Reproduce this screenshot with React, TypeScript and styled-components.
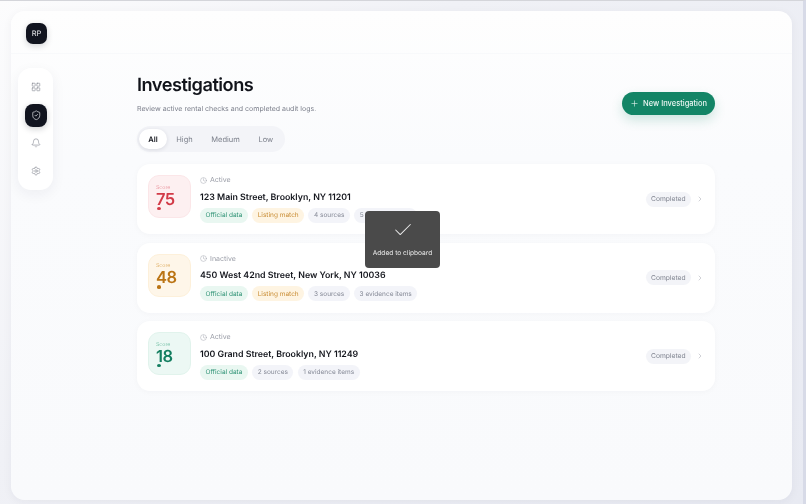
import React from 'react';
import styled, { createGlobalStyle } from 'styled-components';
import { Bell, Check, ChevronRight, Clock, LayoutGrid, Plus, Settings, ShieldCheck } from 'lucide-react';

const GlobalStyle = createGlobalStyle`
  html, body {
    margin: 0;
    padding: 0;
    height: 100%;
    overflow: hidden;
  }
  body {
    background: #e9ebf3;
    font-family: Inter, "Liberation Sans", sans-serif;
    text-rendering: geometricPrecision;
    -webkit-font-smoothing: antialiased;
  }
  * {
    box-sizing: border-box;
  }
`;

const Page = styled.div`
  width: 806px;
  height: 504px;
  padding: 10px 11px 4px 11px;
  border-top: 1px solid #d4d5da;
  border-right: 3px solid #d7dae7;
  background: linear-gradient(135deg, #fcfcfd, #f0f1f6 35%, #e8eaf2);
`;

const Frame = styled.div`
  position: relative;
  height: 100%;
  border-radius: 14px;
  background: linear-gradient(#fefefe, #fafbfd 30%, #f9fafc);
  box-shadow: 0 2px 10px rgba(30, 35, 60, 0.05);
  display: flex;
  flex-direction: column;
  will-change: transform;
`;

const TopBar = styled.header`
  height: 43px;
  flex: none;
  padding: 12px 0 0 15px;
  border-bottom: 1px solid #f8f9fb;
`;

const Avatar = styled.div`
  width: 21px;
  height: 21px;
  border-radius: 7px;
  background: #11141f;
  color: #e8e9ed;
  font-size: 7.5px;
  font-weight: 400;
  display: flex;
  align-items: center;
  justify-content: center;
  box-shadow: 0 2px 6px rgba(17, 20, 31, 0.18);
`;

const Body = styled.div`
  flex: 1;
  display: flex;
  padding: 14px 0 0 7px;
`;

const Rail = styled.nav`
  width: 35px;
  height: 122px;
  flex: none;
  border-radius: 13px;
  background: #fff;
  box-shadow: 0 4px 14px rgba(30, 35, 60, 0.06);
  display: flex;
  flex-direction: column;
  align-items: center;
  padding: 8px 0 0 1px;
  gap: 5.5px;
`;

const RailItem = styled.div<{ $active?: boolean }>`
  width: 22.5px;
  height: 22.5px;
  border-radius: 8px;
  display: flex;
  align-items: center;
  justify-content: center;
  background: ${(p) => (p.$active ? '#11141f' : 'transparent')};
  color: ${(p) => (p.$active ? '#f2f3f6' : '#7d818c')};
  box-shadow: ${(p) => (p.$active ? '0 2px 6px rgba(17,20,31,0.2)' : 'none')};
`;

const Main = styled.main`
  width: 578px;
  margin-left: 84px;
  display: flex;
  flex-direction: column;
`;

const HeadRow = styled.div`
  display: flex;
  justify-content: space-between;
  align-items: flex-start;
`;

const Title = styled.h1`
  margin: 0;
  padding-top: 5px;
  color: #11131a;
  font-size: 18.2px;
  line-height: 24px;
  font-weight: 600;
  letter-spacing: -0.5px;
`;

const Subtitle = styled.p`
  margin: 6px 0 0;
  color: #7b7f8b;
  font-size: 7px;
  line-height: 11px;
`;

const NewButton = styled.button`
  width: 93px;
  height: 23px;
  margin-top: 24px;
  padding: 0;
  border: none;
  border-radius: 12px;
  background: #138566;
  color: #e9f5f1;
  font-family: inherit;
  font-size: 7.5px;
  font-weight: 500;
  white-space: nowrap;
  display: flex;
  align-items: center;
  justify-content: center;
  gap: 4px;
  box-shadow: 0 5px 12px rgba(19, 133, 102, 0.2);
`;

const Filters = styled.div`
  align-self: flex-start;
  height: 26px;
  margin-top: 11px;
  padding: 3px 2px;
  border-radius: 13px;
  background: #f3f4f8;
  display: flex;
  align-items: center;
`;

const Filter = styled.div<{ $active?: boolean }>`
  height: 20px;
  padding: 0 9.3px;
  border-radius: 10px;
  display: flex;
  align-items: center;
  font-size: 7.5px;
  font-weight: ${(p) => (p.$active ? 600 : 400)};
  color: ${(p) => (p.$active ? '#14161d' : '#7d818c')};
  background: ${(p) => (p.$active ? '#fff' : 'transparent')};
  box-shadow: ${(p) => (p.$active ? '0 1px 4px rgba(30,35,60,0.12)' : 'none')};
`;

const List = styled.div`
  margin-top: 12px;
  display: flex;
  flex-direction: column;
  gap: 8.5px;
`;

const Card = styled.article`
  height: 70px;
  padding: 0 6px 0 11px;
  border-radius: 13px;
  background: #fff;
  box-shadow: 0 1px 6px rgba(30, 35, 60, 0.03);
  display: flex;
  align-items: center;
`;

type Tone = 'red' | 'amber' | 'green';

const tones: Record<Tone, { bg: string; border: string; label: string; value: string }> = {
  red: { bg: '#fdf0f1', border: '#fbe6e8', label: '#eb9aa3', value: '#d23b48' },
  amber: { bg: '#fef6e9', border: '#fdf0da', label: '#e0b169', value: '#bb7414' },
  green: { bg: '#ecf8f4', border: '#e1f3ec', label: '#7cc4ab', value: '#137e60' },
};

const ScoreBox = styled.div<{ $tone: Tone }>`
  position: relative;
  width: 43px;
  height: 43px;
  flex: none;
  align-self: flex-start;
  margin-top: 11px;
  padding: 8.5px 0 0 7px;
  border-radius: 11px;
  background: ${(p) => tones[p.$tone].bg};
  border: 1px solid ${(p) => tones[p.$tone].border};
`;

const ScoreLabel = styled.div<{ $tone: Tone }>`
  color: ${(p) => tones[p.$tone].label};
  font-size: 5.2px;
  line-height: 7px;
`;

const ScoreValue = styled.div<{ $tone: Tone }>`
  color: ${(p) => tones[p.$tone].value};
  font-size: 16.5px;
  line-height: 15px;
  font-weight: 600;
  letter-spacing: -0.5px;
`;

const ScoreDot = styled.span<{ $tone: Tone }>`
  position: absolute;
  left: 7.5px;
  bottom: 7px;
  width: 4.5px;
  height: 3.5px;
  border-radius: 50%;
  background: ${(p) => tones[p.$tone].value};
`;

const Info = styled.div`
  flex: 1;
  margin-left: 9px;
  display: flex;
  flex-direction: column;
`;

const StatusLine = styled.div`
  display: flex;
  align-items: center;
  gap: 3px;
  color: #9a9da7;
  font-size: 7px;
  line-height: 10px;
`;

const Address = styled.div`
  margin-top: 5.5px;
  color: #14161d;
  font-size: 8.8px;
  line-height: 14px;
  font-weight: 600;
`;

const Tags = styled.div`
  margin-top: 3px;
  display: flex;
  gap: 4.3px;
`;

const tagTones = {
  green: { bg: '#e9f7f1', color: '#2d9274' },
  amber: { bg: '#fef4e2', color: '#c98d35' },
  grey: { bg: '#f3f4f9', color: '#868a97' },
};

const Tag = styled.span<{ $tone: keyof typeof tagTones }>`
  height: 15px;
  padding: 0 5.5px;
  border-radius: 8px;
  display: flex;
  align-items: center;
  font-size: 6.5px;
  background: ${(p) => tagTones[p.$tone].bg};
  color: ${(p) => tagTones[p.$tone].color};
`;

const Done = styled.span`
  height: 15px;
  padding: 0 5.5px;
  border-radius: 8px;
  display: flex;
  align-items: center;
  font-size: 6.7px;
  background: #f3f4f8;
  color: #7f838f;
`;

const Chevron = styled.span`
  width: 13px;
  margin-left: 2px;
  margin-right: 3px;
  display: flex;
  justify-content: center;
  color: #a2a5af;
`;

const Toast = styled.div`
  position: absolute;
  left: 354px;
  top: 200px;
  width: 75px;
  height: 57px;
  border-radius: 4px;
  background: #4a4a4a;
  color: #eaeaea;
  font-size: 6.6px;
  display: flex;
  flex-direction: column;
  align-items: center;
  padding-top: 8px;
  gap: 8px;
`;

const investigations = [
  {
    score: 75,
    tone: 'red' as Tone,
    status: 'Active',
    address: '123 Main Street, Brooklyn, NY 11201',
    listing: true,
    sources: '4 sources',
    evidence: '5 evidence items',
  },
  {
    score: 48,
    tone: 'amber' as Tone,
    status: 'Inactive',
    address: '450 West 42nd Street, New York, NY 10036',
    listing: true,
    sources: '3 sources',
    evidence: '3 evidence items',
  },
  {
    score: 18,
    tone: 'green' as Tone,
    status: 'Active',
    address: '100 Grand Street, Brooklyn, NY 11249',
    listing: false,
    sources: '2 sources',
    evidence: '1 evidence items',
  },
];

export default function App() {
  return (
    <Page>
      <GlobalStyle />
      <Frame>
        <TopBar>
          <Avatar>RP</Avatar>
        </TopBar>
        <Body>
          <Rail>
            <RailItem>
              <LayoutGrid size={10} strokeWidth={1.4} />
            </RailItem>
            <RailItem $active>
              <ShieldCheck size={10.5} strokeWidth={1.5} />
            </RailItem>
            <RailItem>
              <Bell size={10} strokeWidth={1.4} />
            </RailItem>
            <RailItem>
              <Settings size={10} strokeWidth={1.4} />
            </RailItem>
          </Rail>
          <Main>
            <HeadRow>
              <div>
                <Title>Investigations</Title>
                <Subtitle>Review active rental checks and completed audit logs.</Subtitle>
              </div>
              <NewButton>
                <Plus size={9} strokeWidth={1.6} />
                New Investigation
              </NewButton>
            </HeadRow>
            <Filters>
              <Filter $active>All</Filter>
              <Filter>High</Filter>
              <Filter>Medium</Filter>
              <Filter>Low</Filter>
            </Filters>
            <List>
              {investigations.map((item) => (
                <Card key={item.address}>
                  <ScoreBox $tone={item.tone}>
                    <ScoreLabel $tone={item.tone}>Score</ScoreLabel>
                    <ScoreValue $tone={item.tone}>{item.score}</ScoreValue>
                    <ScoreDot $tone={item.tone} />
                  </ScoreBox>
                  <Info>
                    <StatusLine>
                      <Clock size={7} strokeWidth={1.5} />
                      {item.status}
                    </StatusLine>
                    <Address>{item.address}</Address>
                    <Tags>
                      <Tag $tone="green">Official data</Tag>
                      {item.listing && <Tag $tone="amber">Listing match</Tag>}
                      <Tag $tone="grey">{item.sources}</Tag>
                      <Tag $tone="grey">{item.evidence}</Tag>
                    </Tags>
                  </Info>
                  <Done>Completed</Done>
                  <Chevron>
                    <ChevronRight size={8} strokeWidth={1.5} />
                  </Chevron>
                </Card>
              ))}
            </List>
          </Main>
        </Body>
        <Toast>
          <Check size={22} strokeWidth={1.1} />
          Added to clipboard
        </Toast>
      </Frame>
    </Page>
  );
}
